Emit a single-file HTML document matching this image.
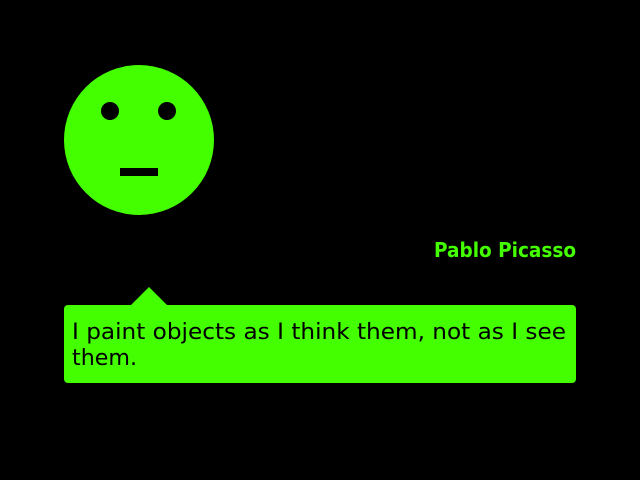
<!DOCTYPE html>
<html><head><meta charset="utf-8"><style>
html,body{margin:0;padding:0;background:#000;width:640px;height:480px;overflow:hidden}
svg{display:block}
text{font-family:"DejaVu Sans","Liberation Sans",sans-serif}
</style></head><body>
<svg width="640" height="480" viewBox="0 0 640 480">
<rect width="640" height="480" fill="#000"/>
<circle cx="139" cy="140" r="75" fill="#44ff00"/>
<circle cx="110" cy="111" r="9" fill="#000"/>
<circle cx="167" cy="111" r="9" fill="#000"/>
<rect x="120" y="168" width="38" height="8" fill="#000"/>
<text x="576" y="257" text-anchor="end" font-size="20" font-weight="bold" fill="#44ff00" textLength="142" lengthAdjust="spacingAndGlyphs">Pablo Picasso</text>
<polygon points="130,306 149,287 168,306" fill="#44ff00"/>
<rect x="64" y="305" width="512" height="78" rx="4" fill="#44ff00"/>
<text x="72" y="339" font-size="22" fill="#000" textLength="494" lengthAdjust="spacingAndGlyphs">I paint objects as I think them, not as I see</text>
<text x="72" y="365" font-size="22" fill="#000" textLength="65" lengthAdjust="spacingAndGlyphs">them.</text>
</svg>
</body></html>
